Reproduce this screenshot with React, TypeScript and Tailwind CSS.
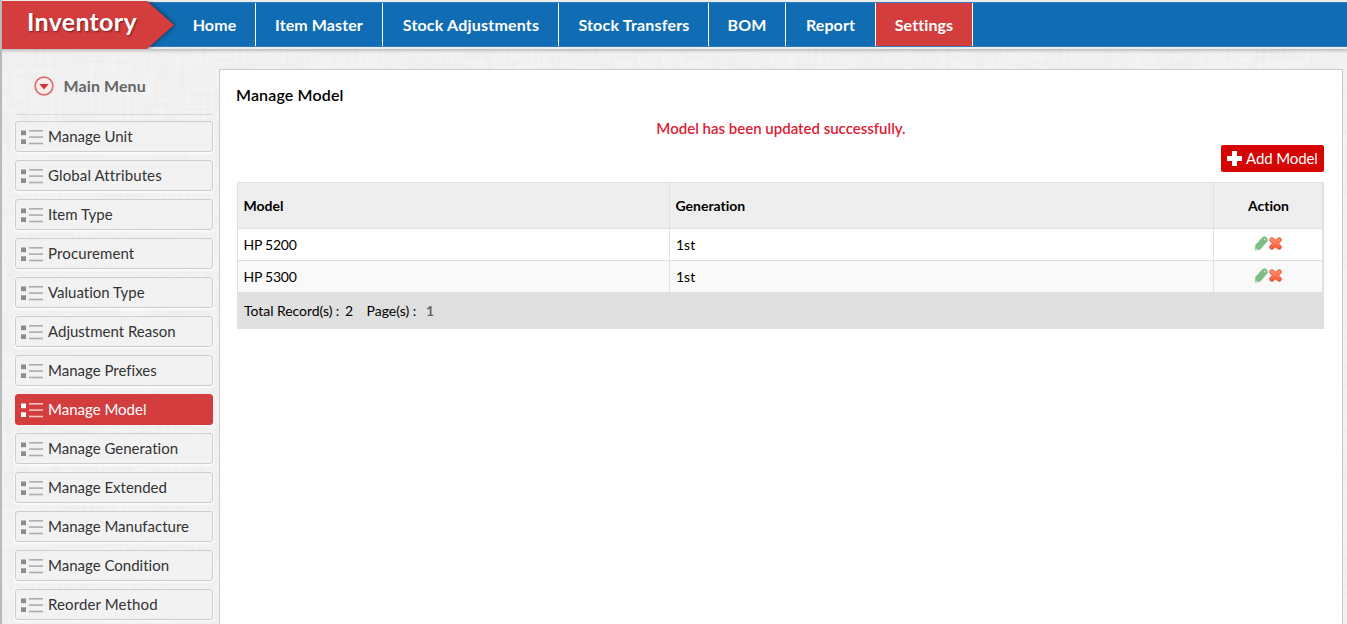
import React from "react";

const tabs = [
  { label: "Home", width: "w-[82px]" },
  { label: "Item Master", width: "w-[127px]" },
  { label: "Stock Adjustments", width: "w-[176px]" },
  { label: "Stock Transfers", width: "w-[150px]" },
  { label: "BOM", width: "w-[77px]" },
  { label: "Report", width: "w-[90px]" },
  { label: "Settings", width: "w-[97px]" },
];

const menu = [
  "Manage Unit",
  "Global Attributes",
  "Item Type",
  "Procurement",
  "Valuation Type",
  "Adjustment Reason",
  "Manage Prefixes",
  "Manage Model",
  "Manage Generation",
  "Manage Extended",
  "Manage Manufacture",
  "Manage Condition",
  "Reorder Method",
];

const rows = [
  { model: "HP 5200", generation: "1st" },
  { model: "HP 5300", generation: "1st" },
];

function ListIcon({ active }: { active: boolean }) {
  const square = active ? "#ffffff" : "#8c8c8c";
  const line = active ? "#f3c4c4" : "#adadad";
  return (
    <svg width="22" height="15" viewBox="0 0 22 15" className="mt-px shrink-0">
      <g fill={square}>
        <rect x="0" y="0.5" width="5" height="4.7" />
        <rect x="0" y="9.3" width="5" height="4.7" />
      </g>
      <g fill={line}>
        <rect x="8" y="0" width="14" height="1.6" />
        <rect x="8" y="6.3" width="14" height="1.6" />
        <rect x="8" y="12.7" width="14" height="1.6" />
      </g>
    </svg>
  );
}

function PencilIcon() {
  return (
    <svg width="13" height="15" viewBox="0 0 13 15">
      <path d="M0.1 14.5 L0.2 9 L7.4 1.2 Q9.2 -0.6 11.1 0.9 L12.2 2.1 Q13.5 3.9 12 5.8 L5 13.8 Z" fill="#80bd83" />
      <circle cx="9.7" cy="3.4" r="0.9" fill="#c9e7c8" />
      <path d="M0.3 14.4 L0.6 11.6 L3.2 13.8 Z" fill="#b4d9b4" />
    </svg>
  );
}

function DeleteIcon() {
  return (
    <svg width="13" height="13" viewBox="0 0 13 13" className="-ml-px">
      <defs>
        <linearGradient id="cross" x1="0" y1="0" x2="0" y2="1">
          <stop offset="0" stopColor="#ff9272" />
          <stop offset="1" stopColor="#fb5731" />
        </linearGradient>
      </defs>
      <path
        d="M3.3 0.6 L6.5 3.1 L9.7 0.6 Q12.7 0.6 12.4 3.5 L9.8 6.5 L12.4 9.5 Q12.7 12.4 9.7 12.4 L6.5 9.9 L3.3 12.4 Q0.3 12.4 0.6 9.5 L3.2 6.5 L0.6 3.5 Q0.3 0.6 3.3 0.6 Z"
        fill="url(#cross)"
        stroke="#e0583b"
        strokeWidth="0.9"
        strokeLinejoin="round"
      />
    </svg>
  );
}

function Weave() {
  return (
    <svg className="pointer-events-none absolute inset-0 h-full w-full">
      <filter id="weave-x" x="0" y="0" width="100%" height="100%">
        <feTurbulence type="fractalNoise" baseFrequency="0.02 0.25" numOctaves="2" seed="4" />
        <feColorMatrix values="0 0 0 0 0.5  0 0 0 0 0.5  0 0 0 0 0.5  0.16 0 0 0 -0.06" />
      </filter>
      <filter id="weave-y" x="0" y="0" width="100%" height="100%">
        <feTurbulence type="fractalNoise" baseFrequency="0.25 0.02" numOctaves="2" seed="9" />
        <feColorMatrix values="0 0 0 0 0.5  0 0 0 0 0.5  0 0 0 0 0.5  0.16 0 0 0 -0.06" />
      </filter>
      <rect width="100%" height="100%" filter="url(#weave-x)" />
      <rect width="100%" height="100%" filter="url(#weave-y)" />
    </svg>
  );
}

function Header() {
  return (
    <header className="relative flex h-[49px] shrink-0 bg-[#ececec] shadow-[0_1px_3px_1px_rgba(0,0,0,0.22)]">
      <div className="mt-[2px] flex h-[45px] w-full border-y border-[#2c7dbc] bg-[#106db3] pl-[172px]">
        {tabs.map((t) => (
          <a
            key={t.label}
            className={`flex shrink-0 items-center justify-center border-r border-white pt-px text-[16px] font-bold whitespace-nowrap text-white ${t.width} ${
              t.label === "Settings" ? "bg-[#d33d3e]" : ""
            } ${t.label.startsWith("Stock") ? "pl-px tracking-[0.2px]" : "tracking-[0.1px]"}`}
          >
            {t.label}
          </a>
        ))}
      </div>
      <div className="absolute top-px left-0 h-12 w-[172px]">
        <svg width="180" height="48" className="absolute top-0 left-0">
          <path d="M0 0 H145 L172 24 L145 48 H0 Z" fill="#d33d3e" className="[filter:drop-shadow(1px_0_2px_rgba(0,0,0,0.5))]" />
        </svg>
        <h1 className="relative pl-[25px] text-[25px] leading-[41px] font-bold tracking-[0.3px] text-white [text-shadow:1px_1px_2px_rgba(60,0,0,0.6)]">
          Inventory
        </h1>
      </div>
    </header>
  );
}

function Sidebar() {
  return (
    <aside className="w-[217px] shrink-0 pl-[13px]">
      <div className="flex h-[66px] w-[198px] items-center gap-[10px] border-b border-[#d9d9d9] pt-[9px] pl-[18.5px]">
        <svg width="20" height="20" viewBox="0 0 20 20">
          <circle cx="10" cy="10" r="8.9" fill="#f7eded" stroke="#df6e6e" strokeWidth="1.7" />
          <path d="M5.3 8 H14.7 L10 13.5 Z" fill="#d23637" />
        </svg>
        <span className="text-[16px] font-bold tracking-[0.1px] text-[#666666]">Main Menu</span>
      </div>
      <nav className="mt-[6px] flex w-[198px] flex-col gap-2">
        {menu.map((m) => {
          const active = m === "Manage Model";
          const wide = ["Global Attributes", "Procurement", "Reorder Method"].includes(m);
          return (
            <a
              key={m}
              className={`flex h-[31px] items-center gap-[5px] rounded-[3px] border pl-[5px] text-[15px] ${
                active
                  ? "border-[#d33d3e] bg-[#d33d3e] text-white"
                  : "border-[#cdcdcd] bg-[#f2f2f2] text-[#333333] shadow-[0_1px_2px_1px_rgba(255,255,255,0.7)]"
              }`}
            >
              <ListIcon active={active} />
              <span className={`whitespace-nowrap ${wide ? "tracking-[0.12px]" : ""}`}>{m}</span>
            </a>
          );
        })}
      </nav>
    </aside>
  );
}

function ModelTable() {
  return (
    <div className="w-[1087px] border-t border-r-2 border-l border-[#e0e0e0] text-[14px] text-black">
      <div className="grid h-[46px] grid-cols-[432px_544px_108px] border-b border-[#e0e0e0] bg-[#eeeeee] font-bold">
        <div className="flex items-center border-r border-[#e0e0e0] pl-[5.5px]">Model</div>
        <div className="flex items-center border-r border-[#e0e0e0] pl-[5.5px]">Generation</div>
        <div className="flex items-center justify-center pl-px">Action</div>
      </div>
      {rows.map((r, i) => (
        <div
          key={r.model}
          className={`grid h-8 grid-cols-[432px_544px_108px] border-b border-[#e0e0e0] ${i % 2 ? "bg-[#f9f9f9]" : "bg-white"}`}
        >
          <div className="flex items-center border-r border-[#e0e0e0] pl-[5.5px] tracking-[-0.25px]">{r.model}</div>
          <div className="flex items-center border-r border-[#e0e0e0] pl-[6px]">{r.generation}</div>
          <div className="flex items-center justify-center gap-[2px] pb-[3px]">
            <PencilIcon />
            <DeleteIcon />
          </div>
        </div>
      ))}
      <div className="flex h-9 items-center bg-[#e0e0e0] pb-px pl-[6px] whitespace-nowrap">
        <span className="w-[101px] tracking-[-0.05px]">Total Record(s) :</span>
        <span className="w-[21.5px]">2</span>
        <span className="w-[59.5px]">Page(s) :</span>
        <span className="font-bold text-[#666666]">1</span>
      </div>
    </div>
  );
}

export default function App() {
  return (
    <div className="relative flex h-[624px] w-[1347px] flex-col overflow-hidden border-l-2 border-[#b9b9b9] bg-[#f3f3f3] font-['Lato',sans-serif] [font-variant-ligatures:none]">
      <Weave />
      <Header />
      <div className="relative flex min-h-0 flex-1">
        <Sidebar />
        <main className="mt-5 w-[1124px] shrink-0 border border-b-0 border-[#cccccc] bg-white pl-[17px]">
          <h2 className="-ml-px mt-[14px] text-[16px] leading-[22px] font-semibold tracking-[0.15px] text-black">Manage Model</h2>
          <p className="mt-[11px] w-[1088px] text-center text-[15px] leading-[22px] font-semibold text-[#e01b34]">
            Model has been updated successfully.
          </p>
          <div className="mt-[6px] mb-[10px] flex w-[1087px] justify-end">
            <button className="flex h-[27px] w-[103px] items-center gap-1 rounded-[2px] bg-[#d40503] pl-[6px] text-[15px] tracking-[-0.1px] whitespace-nowrap text-white">
              <svg width="15" height="15" viewBox="0 0 15 15" className="shrink-0">
                <path d="M5 0 H10 V5 H15 V10 H10 V15 H5 V10 H0 V5 H5 Z" fill="#fff" />
              </svg>
              Add Model
            </button>
          </div>
          <ModelTable />
        </main>
      </div>
    </div>
  );
}
